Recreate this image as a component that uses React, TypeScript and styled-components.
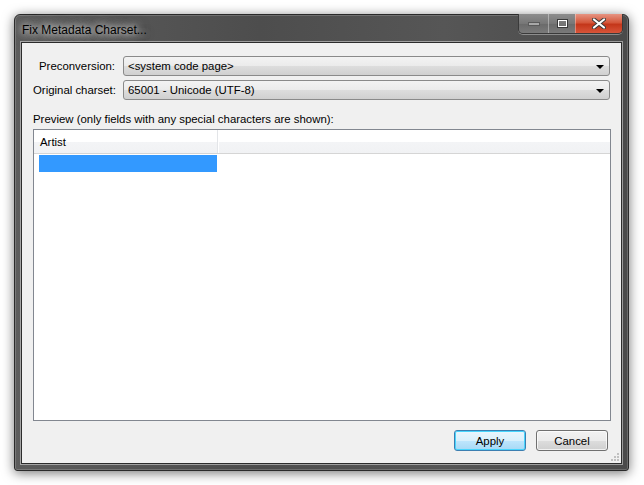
import React from 'react';
import styled, { createGlobalStyle, css } from 'styled-components';

const GlobalStyle = createGlobalStyle`
    html, body {
        margin: 0;
        padding: 0;
        background: #ffffff;
        font-family: "Liberation Sans", Arial, sans-serif;
        font-size: 11.4px;
        color: #000000;
    }
`;

const Page = styled.div`
    width: 644px;
    height: 485px;
    padding: 14px 0 0 14px;
    box-sizing: border-box;
`;

const Window = styled.div`
    width: 615px;
    height: 457px;
    box-sizing: border-box;
    display: flex;
    flex-direction: column;
    border: 1px solid #2a2a2a;
    border-radius: 6px 6px 3px 3px;
    background: linear-gradient(90deg, #5c5c5c 0%, #4d4d4d 40%, #565656 70%, #4a4a4a 100%);
    box-shadow: 0 2px 12px rgba(0, 0, 0, 0.55), inset 0 0 0 1px rgba(255, 255, 255, 0.18);
    padding: 0 6px 6px 6px;
`;

const TitleBar = styled.div`
    height: 27px;
    display: flex;
    align-items: flex-start;
    flex-shrink: 0;
`;

const Title = styled.span`
    margin: 8px 0 0 1px;
    font-family: "Liberation Sans", Arial, sans-serif;
    font-size: 12px;
    color: #000000;
    text-shadow: 0 0 6px rgba(235, 235, 235, 0.9), 0 0 10px rgba(220, 220, 220, 0.8), 0 0 14px rgba(210, 210, 210, 0.6);
`;

const Captions = styled.div`
    margin-left: auto;
    margin-right: -1px;
    margin-top: -1px;
    display: flex;
    border: 1px solid #3a3a3a;
    border-top: none;
    border-radius: 0 0 5px 5px;
    overflow: hidden;
    box-shadow: 0 1px 0 rgba(255, 255, 255, 0.35);
`;

const CaptionButton = styled.div<{ kind: 'min' | 'max' | 'close' }>`
    height: 19px;
    display: flex;
    align-items: center;
    justify-content: center;
    box-sizing: border-box;
    border-left: 1px solid rgba(255, 255, 255, 0.35);
    background: linear-gradient(180deg, #8d8d8d 0%, #777777 50%, #6a6a6a 51%, #7a7a7a 100%);
    ${p => p.kind === 'min' && css`
        width: 29px;
        border-left: none;
    `}
    ${p => p.kind === 'max' && css`
        width: 27px;
    `}
    ${p => p.kind === 'close' && css`
        width: 47px;
        background: linear-gradient(180deg, #e69482 0%, #d4573b 45%, #c4361a 55%, #d8553a 100%);
    `}
`;

const Client = styled.div`
    flex: 1;
    display: flex;
    flex-direction: column;
    background: #f0f0f0;
    border: 1px solid #2c2c2c;
    box-shadow: 0 0 0 1px rgba(255, 255, 255, 0.45);
    padding: 13px 10px 0 11px;
    position: relative;
`;

const Form = styled.div`
    display: grid;
    grid-template-columns: 82px 1fr;
    column-gap: 8px;
    row-gap: 4px;
    align-items: center;
`;

const Label = styled.label`
    text-align: right;
    white-space: nowrap;
`;

const Combo = styled.div`
    height: 20px;
    box-sizing: border-box;
    margin-right: 1px;
    border: 1px solid #8a8a8a;
    border-radius: 3px;
    background: linear-gradient(180deg, #f3f3f3 0%, #ebebeb 50%, #dddddd 51%, #d0d0d0 100%);
    display: flex;
    align-items: center;
    padding: 0 5px 0 4px;
`;

const ComboText = styled.span`
    flex: 1;
`;

const Arrow = styled.span`
    width: 0;
    height: 0;
    border-left: 4px solid transparent;
    border-right: 4px solid transparent;
    border-top: 4px solid #000000;
    margin-top: 1px;
`;

const SectionLabel = styled.div`
    margin-top: 13px;
    height: 16px;
`;

const ListView = styled.div`
    height: 292px;
    box-sizing: border-box;
    border: 1px solid #828790;
    background: #ffffff;
    display: flex;
    flex-direction: column;
`;

const HeaderRow = styled.div`
    height: 24px;
    display: flex;
    box-sizing: border-box;
    border-bottom: 1px solid #d5d5d5;
    background: linear-gradient(180deg, #ffffff 0%, #ffffff 50%, #f3f4f6 51%, #f1f2f4 100%);
`;

const HeaderCell = styled.div<{ width?: number }>`
    display: flex;
    align-items: center;
    padding-left: 6px;
    box-sizing: border-box;
    ${p => p.width ? css`
        width: ${p.width}px;
        border-right: 1px solid #e3e5e8;
        box-shadow: 1px 0 0 #ffffff;
    ` : css`
        flex: 1;
    `}
`;

const Row = styled.div`
    display: flex;
    margin-top: 1px;
    height: 17px;
`;

const Cell = styled.div<{ width: number; selected?: boolean }>`
    width: ${p => p.width}px;
    margin-left: 5px;
    background: ${p => p.selected ? '#3399ff' : 'transparent'};
`;

const Footer = styled.div`
    display: flex;
    justify-content: flex-end;
    gap: 10px;
    margin-top: 9px;
    padding-right: 3px;
`;

const Button = styled.button<{ primary?: boolean }>`
    width: 72px;
    height: 21px;
    box-sizing: border-box;
    border-radius: 3px;
    font-family: "Liberation Sans", Arial, sans-serif;
    font-size: 11.4px;
    color: #000000;
    padding: 0;
    border: 1px solid #707070;
    background: linear-gradient(180deg, #f2f2f2 0%, #ebebeb 50%, #dddddd 51%, #cfcfcf 100%);
    box-shadow: inset 0 0 0 1px rgba(255, 255, 255, 0.7);
    ${p => p.primary && css`
        border-color: #3c7fb1;
        background: linear-gradient(180deg, #eaf6fd 0%, #d9f0fc 50%, #bee6fd 51%, #a7d9f5 100%);
        box-shadow: inset 0 0 0 1px #48d5fd;
    `}
`;

const Grip = styled.svg`
    position: absolute;
    right: 2px;
    bottom: 2px;
`;

const CloseGlyph = () => (
    <svg width="14" height="11" viewBox="0 0 14 11">
        <path d="M2 1.5 L12 9.5 M12 1.5 L2 9.5" stroke="#3a3a3a" strokeWidth="4" strokeLinecap="round" />
        <path d="M2 1.5 L12 9.5 M12 1.5 L2 9.5" stroke="#ffffff" strokeWidth="2.2" strokeLinecap="round" />
    </svg>
);

const MinGlyph = () => (
    <svg width="12" height="6" viewBox="0 0 12 6">
        <rect x="0.5" y="1.5" width="11" height="3" fill="#a8a8a8" stroke="#5a5a5a" strokeWidth="1" />
    </svg>
);

const MaxGlyph = () => (
    <svg width="11" height="9" viewBox="0 0 11 9">
        <rect x="1" y="1" width="9" height="7" fill="none" stroke="#3a3a3a" strokeWidth="2" />
        <rect x="1.5" y="1.5" width="8" height="6" fill="none" stroke="#ffffff" strokeWidth="1" />
        <rect x="2.5" y="3.5" width="6" height="3" fill="#777777" />
    </svg>
);

const App = () => {
    return (
        <Page>
            <GlobalStyle />
            <Window>
                <TitleBar>
                    <Title>Fix Metadata Charset...</Title>
                    <Captions>
                        <CaptionButton kind="min"><MinGlyph /></CaptionButton>
                        <CaptionButton kind="max"><MaxGlyph /></CaptionButton>
                        <CaptionButton kind="close"><CloseGlyph /></CaptionButton>
                    </Captions>
                </TitleBar>
                <Client>
                    <Form>
                        <Label>Preconversion:</Label>
                        <Combo>
                            <ComboText>&lt;system code page&gt;</ComboText>
                            <Arrow />
                        </Combo>
                        <Label>Original charset:</Label>
                        <Combo>
                            <ComboText>65001 - Unicode (UTF-8)</ComboText>
                            <Arrow />
                        </Combo>
                    </Form>
                    <SectionLabel>Preview (only fields with any special characters are shown):</SectionLabel>
                    <ListView>
                        <HeaderRow>
                            <HeaderCell width={184}>Artist</HeaderCell>
                            <HeaderCell />
                        </HeaderRow>
                        <Row>
                            <Cell width={178} selected />
                        </Row>
                    </ListView>
                    <Footer>
                        <Button primary>Apply</Button>
                        <Button>Cancel</Button>
                    </Footer>
                    <Grip width="10" height="10" viewBox="0 0 10 10">
                        {[[8, 2], [8, 5], [8, 8], [5, 5], [5, 8], [2, 8]].map(([x, y]) => (
                            <rect key={`${x}-${y}`} x={x} y={y} width="2" height="2" fill="#c0c0c0" />
                        ))}
                    </Grip>
                </Client>
            </Window>
        </Page>
    );
};

export default App;
